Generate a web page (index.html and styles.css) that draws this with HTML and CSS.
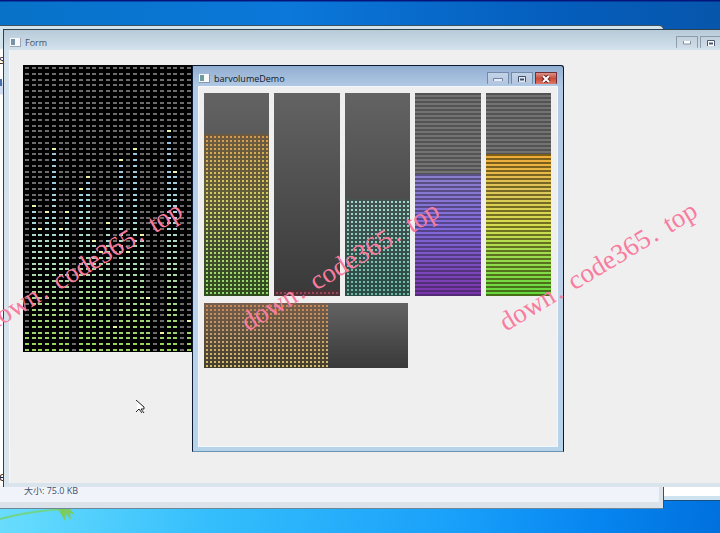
FILE: index.html
```html
<!DOCTYPE html>
<html lang="en">
<head>
<meta charset="utf-8">
<title>barvolumeDemo</title>
<link rel="stylesheet" href="styles.css">
</head>
<body>
<main class="desktop">
  <svg class="leaf" width="90" height="24" viewBox="0 0 90 24" aria-hidden="true">
    <path d="M0 10Q28 2 66 0" fill="none" stroke="#6fd58c" stroke-width="2"/>
    <path d="M58 0l7 12 1-7 5 6-1-7 5 2-5-6z" fill="#7bcb60"/>
  </svg>

  <div class="sheet"></div>
  <section class="explorer">
    <span class="clip clip-top">s</span>
    <span class="clip clip-mark"></span>
    <span class="clip clip-low">e</span>
    <footer class="details"><span class="size">大小: 75.0 KB</span></footer>
  </section>

  <section class="window form">
    <header class="titlebar">
      <svg class="app" width="11" height="9" viewBox="0 0 11 9" aria-hidden="true"><path fill="#f6f8fa" d="M0 0h11v9H0z"/><path fill="#7893a8" d="M1 1h4v6H1z"/><path fill="#9aa8b4" d="M10 0h1v9H0V8h10z"/></svg>
      <h1 class="title">Form</h1>
      <div class="controls">
        <button class="control" aria-label="Minimize"><svg width="10" height="6" viewBox="0 0 10 6"><path d="M1.500 1v3h7V1" fill="#fff" stroke="#8391a5"/></svg></button>
        <button class="control" aria-label="Maximize"><svg width="10" height="8" viewBox="0 0 10 8"><path d="M1.500 7V1.500h7V7" fill="#fff" stroke="#4b5870"/><path d="M3 4.500h4" stroke="#4b5870" stroke-width="2"/></svg></button>
      </div>
    </header>
    <div class="client">
      <svg class="spectrum" id="spectrum" viewBox="0 0 171 287" role="img" aria-label="Spectrum"></svg>
    </div>
  </section>

  <section class="window demo">
    <header class="titlebar">
      <svg class="app" width="11" height="9" viewBox="0 0 11 9" aria-hidden="true"><path fill="#f8fafa" d="M0 0h11v9H0z"/><path fill="#6e9c9c" d="M1 1h4v6H1z"/><path fill="#8798ac" d="M10 0h1v9H0V8h10z"/></svg>
      <h2 class="title">barvolumeDemo</h2>
      <div class="controls">
        <button class="control" aria-label="Minimize"><svg width="12" height="6" viewBox="0 0 12 6"><path d="M1.500 5V2.500h9V5" fill="#e7edf8" stroke="#7283a5"/></svg></button>
        <button class="control" aria-label="Maximize"><svg width="10" height="8" viewBox="0 0 10 8"><path d="M1.500 7V1.500h7V7" fill="#e7edf8" stroke="#414e6b"/><path d="M3 4.500h4" stroke="#414e6b" stroke-width="2"/></svg></button>
        <button class="control close" aria-label="Close"><svg width="10" height="8" viewBox="0 0 10 8"><path d="M2 1l6 6M8 1L2 7" stroke="#6e2424" stroke-width="4"/><path d="M2 1l6 6M8 1L2 7" stroke="#fff" stroke-width="2"/></svg></button>
      </div>
    </header>
    <div class="client">
      <div class="meters">
        <div class="meter"><div class="fill dots amber"></div></div>
        <div class="meter"><div class="fill dots red"></div></div>
        <div class="meter"><div class="fill dots teal"></div></div>
        <div class="meter lined"><div class="fill violet"></div></div>
        <div class="meter lined"><div class="fill rainbow"></div></div>
      </div>
      <div class="meter across"><div class="fill dots orange"></div></div>
    </div>
  </section>

  <svg class="cursor" width="9" height="14" viewBox="0 0 9 14" aria-hidden="true"><path d="M1 1v11l3-3 2 4 2-1-2-3h3z" fill="#fff"/><path d="M0 0l8 7v2H5l3 4M0 12l3-3 3 4" fill="none" stroke="#222" stroke-width="1"/></svg>

  <div class="watermark mark-left">down<i>.</i>code365<i>.</i>top</div>
  <div class="watermark mark-middle">down<i>.</i>code365<i>.</i>top</div>
  <div class="watermark mark-right">down<i>.</i>code365<i>.</i>top</div>
</main>
<script src="spectrum.js"></script>
</body>
</html>
```
FILE: styles.css
```css
* { box-sizing: border-box; }
body { margin: 0; font-family: "Open Sans", "Noto Sans CJK SC", sans-serif; }
h1, h2 { margin: 0; font-weight: 400; }

.desktop {
  position: relative;
  min-height: 100vh;
  overflow: hidden;
  background:
    linear-gradient(#05157c 0 1px, transparent 2px),
    linear-gradient(90deg, #0872c8, #0b78da 40%, #055fbe 75%, #0756ac) 0 0 / 100% 60px no-repeat,
    linear-gradient(100deg, #82e4fc, #62d9fd 15%, #36bffc 36%, #189ffa 68%, #0786f1 84%, #0070dd);
}
.leaf { position: absolute; left: 0; bottom: 0; }

.explorer {
  position: absolute;
  left: -8px;
  top: 25px;
  bottom: 24px;
  width: 672px;
  border: 1px solid #3d5260;
  border-bottom-color: #6a8799;
  border-radius: 0 5px 0 0;
  background: linear-gradient(#d3e4ec 0 22px, #fff 24px 55px, #cfdcf2 57px 68px, #fff 69px);
  display: flex;
  flex-direction: column;
  justify-content: flex-end;
}
.sheet {
  position: absolute;
  left: 650px;
  right: -8px;
  bottom: 32px;
  height: 30px;
  background: #fff;
  border-bottom: 1px solid #174f80;
  box-shadow: inset 0 -4px #cfe2ef;
}
.details {
  height: 22px;
  padding-left: 31px;
  background: #f0f3fa;
  border: solid #dbe2ea;
  border-width: 0 4px 6px 0;
}
.size {
  display: block;
  font-size: 9px;
  line-height: 10px;
  color: #44506a;
}
.clip { position: absolute; left: 6px; font-size: 12px; line-height: 12px; color: #222; }
.clip-top { top: 28px; }
.clip-mark { left: 7px; top: 53px; width: 2px; height: 7px; background: #4a6fae; }
.clip-low { bottom: 25px; }

.window {
  position: absolute;
  display: flex;
  flex-direction: column;
}
.form {
  left: 3px;
  right: -40px;
  top: 29px;
  bottom: 46px;
  border: solid #31414e;
  border-width: 1px 0 0 1px;
  background: linear-gradient(#b7cad8, #d3e2ed 20px, #dae4ec);
}
.form > .client {
  flex: 1;
  margin: 0 5px 4px 5px;
  padding: 15px 13px;
  border-left: 1px solid #f5f8fb;
  background: #f0efef;
}
.demo {
  left: 192px;
  top: 65px;
  width: 372px;
  height: 387px;
  border: 1px solid #0a1830;
  border-bottom-color: #6e93b1;
  border-radius: 0 3px 0 0;
  background: linear-gradient(#91aed1, #b0c8e4 20px, #bdd2e9 60%, #b5d3e9);
}
.demo > .client {
  flex: 1;
  margin: 0 5px 4px 5px;
  padding: 7px 7px 7px 6px;
  background: #f0efef;
  box-shadow: inset 0 0 0 1px #f4f8fe;
}

.titlebar { display: flex; align-items: flex-start; height: 20px; padding: 8px 6px 0 6px; }
.app { flex: none; }
.title {
  flex: 1;
  margin-left: 4px;
  font-size: 9px;
  line-height: 10px;
  color: #101828;
}
.form .title { color: #46535f; }
.controls { display: flex; gap: 2px; margin-top: -2px; }
.form .controls { margin-right: 32px; }
.control {
  width: 22px;
  height: 12px;
  padding: 0;
  border: 1px solid #7389a8;
  border-bottom: 0;
  border-radius: 1px;
  background: linear-gradient(#c4d3e7, #b3c5de);
  display: flex;
  align-items: center;
  justify-content: center;
}
.form .control { background: linear-gradient(#c3d1de, #d0dde8); border-color: #8b9cab; }
.close { border-color: #702f39; background: linear-gradient(#d99287, #cb4b38 50%, #dc7765); }

.spectrum { display: block; width: 171px; height: 287px; background: #000; }

.meters { display: grid; grid-template-columns: repeat(5, 1fr); gap: 5px; height: 203px; }
.meter {
  display: flex;
  align-items: flex-end;
  background: linear-gradient(#636363, #393939);
}
.lined { background: repeating-linear-gradient(#535353 0 2px, #737373 2px 4px); }
.fill { position: relative; width: 100%; height: 100%; }
.dots::before {
  content: "";
  position: absolute;
  inset: 0;
  background: var(--ink);
  mask:
    linear-gradient(90deg, transparent 2px, #000 2px) 0 0 / 4px 4px,
    linear-gradient(transparent 2px, #000 2px) 0 0 / 4px 4px;
  mask-composite: intersect;
}
.amber {
  --ink: linear-gradient(#d4994e, #d6bd5c 25%, #ced66c 50%, #a9d76c 75%, #92d670);
  height: 80%;
  background: linear-gradient(#6c5a40, #605c38 40%, #444c30 70%, #304c1c);
}
.red { --ink: linear-gradient(#94485a, #94485a); height: 3%; background: #4c3036; }
.teal { --ink: linear-gradient(#a0dcd0, #84cabb 50%, #66b6a2); height: 48%; background: linear-gradient(#455351, #2c4b45); }
.orange {
  --ink: linear-gradient(#c98552, #c59c68 45%, #d2c070);
  width: 61%;
  background: linear-gradient(#765f4e, #5d4f3e 50%, #463f2e);
}
.violet {
  height: 60%;
  background:
    repeating-linear-gradient(rgba(44, 34, 60, .5) 0 2px, transparent 2px 4px),
    linear-gradient(#8a80cc, #8068dc 45%, #7c57c8 65%, #7a32ac);
}
.rainbow {
  height: 70%;
  background:
    repeating-linear-gradient(rgba(50, 42, 0, .6) 0 2px, transparent 2px 4px),
    linear-gradient(#f0ab38, #dec65c 25%, #d5dc50 50%, #a0dc50 70%, #62d83c);
}
.across { width: 204px; height: 65px; margin-top: 7px; }

.cursor { position: absolute; left: 136px; top: 400px; }

.watermark {
  position: absolute;
  top: 266px;
  font-family: "Liberation Serif", serif;
  font-size: 27px;
  line-height: 28px;
  white-space: nowrap;
  color: #f87c9f;
  transform: translate(-50%, -50%) rotate(-31deg);
  pointer-events: none;
}
.watermark i { font-style: normal; margin: 0 11px 0 2px; }
.mark-left { left: 83px; }
.mark-middle { left: 340px; }
.mark-right { left: 598px; }
```
FILE: spectrum.js
```js
// Each column: [row of the peak marker, first lit row]; 50 means unlit.
const columns = [
  [50, 46], [24, 25], [28, 29], [25, 26], [14, 15], [28, 29], [25, 26],
  [50, 50], [21, 22], [19, 20], [30, 31], [32, 33], [27, 28], [45, 46],
  [16, 17], [32, 33], [14, 15], [29, 30], [40, 41], [50, 50], [46, 47],
  [11, 12], [18, 19], [50, 50], [44, 46]
];
const rows = 50;
const stops = [[11, [150, 190, 226]], [26, [165, 215, 220]], [34, [172, 218, 178]], [49, [151, 208, 88]]];

function litColor(row) {
  for (let i = 1; i < stops.length; i++) {
    const [r0, a] = stops[i - 1];
    const [r1, b] = stops[i];
    if (row <= r1) {
      const t = (row - r0) / (r1 - r0);
      return `rgb(${a.map((v, k) => Math.round(v + (b[k] - v) * t)).join(",")})`;
    }
  }
}

const svg = document.getElementById("spectrum");
columns.forEach(([peak, lit], c) => {
  for (let row = 0; row < rows; row++) {
    const cell = document.createElementNS("http://www.w3.org/2000/svg", "rect");
    cell.setAttribute("x", Math.round(2 + c * 6.74));
    cell.setAttribute("y", Math.round(2 + row * 5.75));
    cell.setAttribute("width", 4);
    cell.setAttribute("height", 2);
    cell.setAttribute("fill", row === peak ? "#f0f4a8" : row >= lit ? litColor(row) : "#6c6c6c");
    svg.appendChild(cell);
  }
});
```
